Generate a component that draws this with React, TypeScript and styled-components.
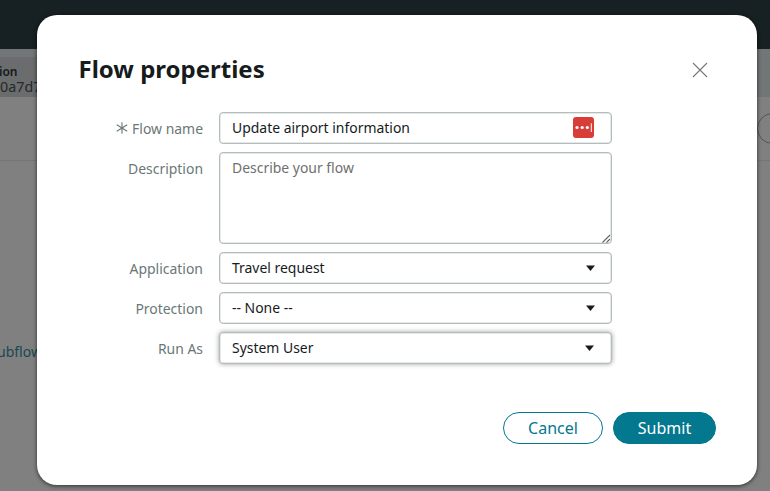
import React from "react";
import styled, { createGlobalStyle } from "styled-components";

const GlobalStyle = createGlobalStyle`
  *, *::before, *::after { box-sizing: border-box; }
  body {
    margin: 0;
    overflow: hidden;
    font-family: "Noto Sans", "Open Sans", sans-serif;
    color: #161b1c;
  }
`;

const Screen = styled.div`
  position: relative;
  width: 770px;
  height: 491px;
  overflow: hidden;
  background: #808080;
`;

const Backdrop = styled.div`
  display: flex;
  flex-direction: column;
  height: 100%;
`;

const TopBar = styled.div`
  height: 49px;
  background: #172022;
`;

const TabStrip = styled.div`
  height: 48px;
  padding-top: 8px;
  background: #737676;
`;

const Tab = styled.div`
  width: 110px;
  height: 40px;
  padding-top: 6px;
  background: #6b6c6e;
  color: #15191a;
`;

const TabTitle = styled.div`
  margin-left: -1px;
  font-size: 12px;
  line-height: 17px;
  font-weight: 600;
`;

const TabId = styled.div`
  font-size: 14.3px;
  line-height: 13px;
  color: #25292a;
`;

const Toolbar = styled.div`
  display: flex;
  justify-content: flex-end;
  align-items: center;
  height: 64px;
  border-bottom: 1px solid #757676;
`;

const RoundButton = styled.div`
  flex: none;
  width: 60px;
  height: 31px;
  margin-right: -47px;
  border: 1px solid #535657;
  border-radius: 16px;
`;

const BackLink = styled.a`
  margin: 181px 0 0 -3px;
  font-size: 14px;
  line-height: 20px;
  color: #174851;
`;

const Dialog = styled.section`
  position: absolute;
  left: 37px;
  top: 15px;
  width: 720px;
  height: 470px;
  padding: 36px 41px 0 41.5px;
  display: flex;
  flex-direction: column;
  background: #fff;
  border-radius: 20px;
  box-shadow: 0 1px 4px rgba(0, 0, 0, 0.65);
`;

const DialogHeader = styled.header`
  display: flex;
  justify-content: space-between;
  align-items: center;
  height: 36px;
  padding-right: 8.5px;
`;

const Title = styled.h1`
  margin: 0;
  font-size: 24px;
  line-height: 36px;
  font-weight: 700;
`;

const CloseButton = styled.button`
  display: flex;
  padding: 0;
  border: 0;
  margin-top: 2px;
  background: none;
`;

const Form = styled.form`
  display: flex;
  flex-direction: column;
  gap: 8px;
  width: 533px;
  margin-top: 25px;
`;

const Row = styled.div`
  display: grid;
  grid-template-columns: 124.5px 393px;
  column-gap: 16px;
`;

const Label = styled.label`
  display: flex;
  justify-content: flex-end;
  align-items: center;
  gap: 4px;
  height: 32px;
  font-size: 13.95px;
  color: #6a7777;
  white-space: nowrap;
`;

const Field = styled.div<{ $height?: number; $raised?: boolean }>`
  position: relative;
  display: flex;
  justify-content: space-between;
  align-items: flex-start;
  height: ${(p) => p.$height ?? 32}px;
  padding: 0 16px 0 12px;
  border: 1px solid #b4bdbc;
  border-radius: 4px;
  background: #fff;
  font-size: 13.95px;
  line-height: 30px;
  box-shadow: inset 0 0 0 0.5px #ccd3d2${(p) => (p.$raised ? ", 0 0 5px rgba(0, 0, 0, 0.38)" : "")};
`;

const Placeholder = styled.span`
  color: #6f6f6f;
`;

const Grip = styled.svg`
  position: absolute;
  right: 0;
  bottom: 0;
`;

const Caret = styled.svg<{ $shift?: number }>`
  align-self: center;
  margin-right: ${(p) => p.$shift ?? 0}px;
`;

const PasswordBadge = styled.svg`
  margin: 4px 1px 0 0;
`;

const Actions = styled.footer`
  display: flex;
  justify-content: flex-end;
  gap: 10px;
  margin-top: 48px;
`;

const Button = styled.button<{ $primary?: boolean }>`
  width: ${(p) => (p.$primary ? 103 : 100)}px;
  height: 32px;
  padding: 0;
  border: 1px solid #03788e;
  border-radius: 16px;
  background: ${(p) => (p.$primary ? "#03788e" : "#fff")};
  color: ${(p) => (p.$primary ? "#fff" : "#03788e")};
  font: 400 16px/30px "Noto Sans", sans-serif;
`;

function Select({ label, value, raised }: { label: string; value: string; raised?: boolean }) {
  return (
    <Row>
      <Label>{label}</Label>
      <Field $raised={raised}>
        <span>{value}</span>
        <Caret width="9" height="6" $shift={raised ? 1 : 0}>
          <path d="M0 .5h9L4.5 6z" fill="#161b1c" />
        </Caret>
      </Field>
    </Row>
  );
}

export default function App() {
  return (
    <>
      <GlobalStyle />
      <Screen>
        <Backdrop>
          <TopBar />
          <TabStrip>
            <Tab>
              <TabTitle>ion</TabTitle>
              <TabId>0a7d7</TabId>
            </Tab>
          </TabStrip>
          <Toolbar>
            <RoundButton />
          </Toolbar>
          <BackLink>ubflow</BackLink>
        </Backdrop>
        <Dialog role="dialog" aria-label="Flow properties">
          <DialogHeader>
            <Title>Flow properties</Title>
            <CloseButton aria-label="Close">
              <svg width="16" height="16" viewBox="0 0 16 16">
                <path d="M1 1l14 14M15 1L1 15" stroke="#747777" strokeWidth="1.1" />
              </svg>
            </CloseButton>
          </DialogHeader>
          <Form>
            <Row>
              <Label>
                <svg width="12" height="12" viewBox="0 0 12 12">
                  <path d="M6 .2v11.6M.8 2.8l10.4 6.4M11.2 2.8L.8 9.2" stroke="#6a7777" strokeWidth="1.1" />
                </svg>
                Flow name
              </Label>
              <Field>
                <span>Update airport information</span>
                <PasswordBadge width="21" height="21" viewBox="0 0 21 21">
                  <rect width="21" height="21" rx="3" fill="#d83d38" />
                  <g fill="#fff">
                    <circle cx="4" cy="10.5" r="1.6" />
                    <circle cx="9.2" cy="10.5" r="1.6" />
                    <circle cx="14.3" cy="10.5" r="1.6" />
                    <rect x="17.8" y="6.3" width="1" height="8.6" />
                  </g>
                </PasswordBadge>
              </Field>
            </Row>
            <Row>
              <Label>Description</Label>
              <Field $height={92}>
                <Placeholder>Describe your flow</Placeholder>
                <Grip width="9" height="9">
                  <path d="M.5 8.5L8 1M4.5 8.5L8 5" stroke="#666" strokeWidth="1.1" />
                </Grip>
              </Field>
            </Row>
            <Select label="Application" value="Travel request" />
            <Select label="Protection" value="-- None --" />
            <Select label="Run As" value="System User" raised />
          </Form>
          <Actions>
            <Button>Cancel</Button>
            <Button $primary>Submit</Button>
          </Actions>
        </Dialog>
      </Screen>
    </>
  );
}
